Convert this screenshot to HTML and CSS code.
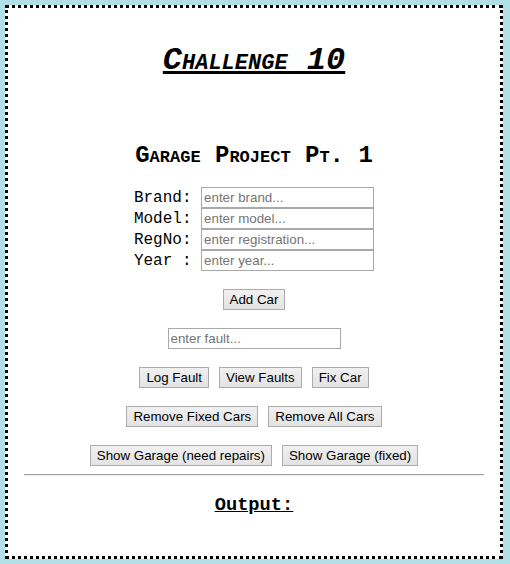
FILE: index.html
```html
<!DOCTYPE html>
<html>
<head>
<meta charset="utf-8">
<link rel="stylesheet" href="styles.css">
</head>
<body>
<div class="page">
  <h1 class="title">Challenge 10</h1>
  <h2 class="subtitle">Garage Project Pt. 1</h2>
  <div class="form">
    <div class="row"><span class="label">Brand:</span><input class="field" type="text" placeholder="enter brand..."></div>
    <div class="row"><span class="label">Model:</span><input class="field" type="text" placeholder="enter model..."></div>
    <div class="row"><span class="label">RegNo:</span><input class="field" type="text" placeholder="enter registration..."></div>
    <div class="row"><span class="label">Year :</span><input class="field" type="text" placeholder="enter year..."></div>
  </div>
  <div class="actions">
    <div class="btn-row"><button class="btn">Add Car</button></div>
    <div class="btn-row"><input class="field" type="text" placeholder="enter fault..."></div>
    <div class="btn-row"><button class="btn">Log Fault</button><button class="btn">View Faults</button><button class="btn">Fix Car</button></div>
    <div class="btn-row"><button class="btn">Remove Fixed Cars</button><button class="btn">Remove All Cars</button></div>
    <div class="btn-row"><button class="btn">Show Garage (need repairs)</button><button class="btn">Show Garage (fixed)</button></div>
  </div>
  <hr class="divider">
  <h3 class="output-title">Output:</h3>
  <div class="output"></div>
</div>
</body>
</html>
```

FILE: styles.css
```css
html, body {
  background: #b0e0e6;
}
body {
  margin: 5px;
  font-family: "Liberation Mono", "Courier New", monospace;
  color: #000;
}
.page {
  width: 498px;
  box-sizing: border-box;
  background: #fff;
  border: 3px dotted #000;
  display: flex;
  flex-direction: column;
  align-items: center;
}
.title {
  margin: 34px 0 0;
  font-size: 32px;
  font-style: italic;
  font-weight: bold;
  font-variant: small-caps;
  text-decoration: underline;
  line-height: normal;
}
.subtitle {
  margin: 63px 0 0;
  font-size: 24px;
  font-weight: bold;
  font-variant: small-caps;
  line-height: normal;
}
.form {
  margin-top: 18px;
  display: flex;
  flex-direction: column;
}
.row {
  display: flex;
  align-items: baseline;
  font-size: 16px;
}
.label {
  white-space: pre;
  margin-right: 9.6px;
}
.field {
  width: 173px;
  height: 21px;
  box-sizing: border-box;
  margin: 0;
  padding: 1px 2px;
  border: 1px solid #a9a9a9;
  font-family: "Liberation Sans", Arial, sans-serif;
  font-size: 13.33px;
  background: #fff;
  color: #000;
}
.field::placeholder {
  color: #757575;
}
.actions {
  margin-top: 18px;
  display: flex;
  flex-direction: column;
  align-items: center;
  gap: 18px;
}
.btn-row {
  display: flex;
  gap: 10px;
}
.btn {
  height: 21px;
  box-sizing: border-box;
  margin: 0;
  padding: 1px 6px;
  border: 1px solid #acacac;
  border-radius: 0;
  background: linear-gradient(#f0f0f0, #e3e3e3);
  font-family: "Liberation Sans", Arial, sans-serif;
  font-size: 13.33px;
  color: #000;
}
.divider {
  align-self: stretch;
  margin: 8px 16px 0;
  border: 0;
  border-top: 1px solid #a0a0a0;
  border-bottom: 1px solid #eeeeee;
  height: 0;
}
.output-title {
  margin: 18px 0 0;
  font-size: 18.72px;
  font-weight: bold;
  text-decoration: underline;
  line-height: normal;
}
.output {
  height: 40px;
}
```
